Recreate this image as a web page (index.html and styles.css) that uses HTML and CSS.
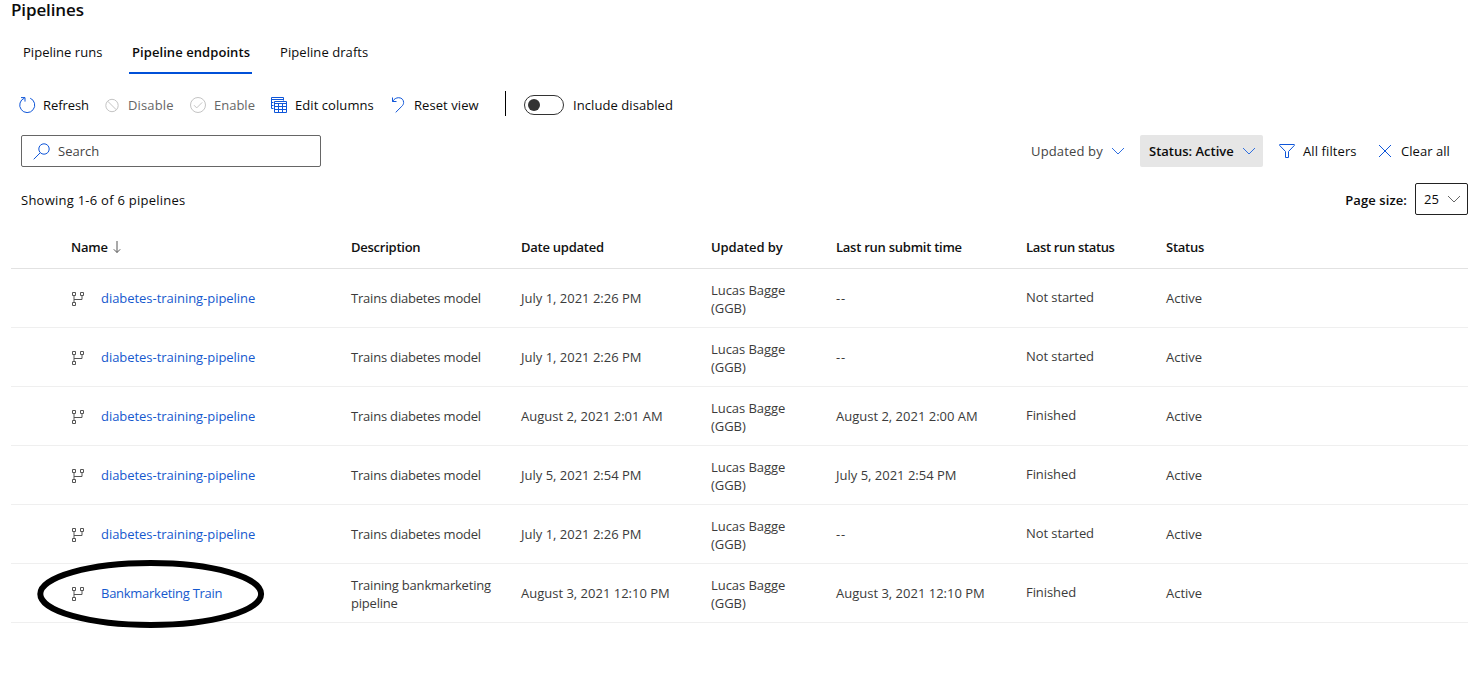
FILE: index.html
```
<!DOCTYPE html>
<html lang="en">
<head>
<meta charset="utf-8">
<title>Pipelines</title>
<link rel="stylesheet" href="styles.css">
</head>
<body>
<svg class="defs" width="0" height="0">
  <symbol id="branch" viewBox="0 0 14 15"><path d="M1.5 1.5h3v3h-3zM9.5 1.5h3v3h-3zM1.5 11.5h3v3h-3zM3 4.5v7M3 8.5h8v-4"/></symbol>
  <symbol id="chevron" viewBox="0 0 14 8"><path d="M1 1l6 6 6-6"/></symbol>
</svg>
<main class="page">
  <h1 class="title">Pipelines</h1>
  <nav class="tabs">
    <a class="tab tab-runs">Pipeline runs</a>
    <a class="tab tab-active">Pipeline endpoints</a>
    <a class="tab tab-drafts">Pipeline drafts</a>
  </nav>
  <div class="toolbar">
    <button class="tool refresh"><svg viewBox="0 0 16 16"><path d="M11.200 1.200A7.500 7.500 0 1 1 5.500 1.100M2 .6h4v4"/></svg><span>Refresh</span></button>
    <button class="tool disable muted"><svg viewBox="0 0 16 16"><circle cx="8" cy="8.5" r="6.200"/><path d="M3.700 4.200l8.600 8.600"/></svg><span>Disable</span></button>
    <button class="tool enable muted"><svg viewBox="0 0 16 16"><circle cx="8" cy="8" r="7.5"/><path d="M4 8.2l2.7 2.7 5.5-5.5"/></svg><span>Enable</span></button>
    <button class="tool columns"><svg viewBox="0 0 16 16"><path d="M2.5 11.5h-2v-11h12v3M0.500 2.500h12M0.500 5.500h2M0.500 8.500h2M3.500 4.500h12v11h-12zM3.500 6.500h12M3.500 9.500h12M3.500 12.500h12M7.500 6.500v9M11.500 6.500v9"/></svg><span>Edit columns</span></button>
    <button class="tool reset"><svg viewBox="0 0 16 16"><path d="M2.500 .5v4h4M2.500 4.500C4 2 6.200 .7 8.700 .7c3.300 0 4.900 2.400 4.900 4.800 0 1.700-.8 2.800-1.800 3.800L5.700 15.400"/></svg><span>Reset view</span></button>
    <span class="divider"></span>
    <span class="toggle"><span class="knob"></span></span>
    <span class="toggle-label">Include disabled</span>
  </div>
  <div class="filters">
    <label class="search"><svg viewBox="0 0 17 17"><circle cx="11" cy="6" r="5.200"/><path d="M7.300 9.700L.7 16.300"/></svg><span>Search</span></label>
    <div class="filter-actions">
      <button class="drop updated"><span>Updated by</span><svg class="chev"><use href="#chevron"/></svg></button>
      <button class="drop status"><span>Status: Active</span><svg class="chev"><use href="#chevron"/></svg></button>
      <button class="act all"><svg viewBox="0 0 16 16"><path d="M.7 1.500h14.600v1L9.500 8.500v6h-3v-6L.7 2.500z"/></svg><span>All filters</span></button>
      <button class="act clear"><svg viewBox="0 0 16 16"><path d="M2 2l12 12M14 2L2 14"/></svg><span>Clear all</span></button>
    </div>
  </div>
  <div class="summary">
    <span class="showing">Showing 1-6 of 6 pipelines</span>
    <span class="page-label">Page size:</span>
    <span class="select"><span>25</span><svg class="chev"><use href="#chevron"/></svg></span>
  </div>
  <section class="table">
    <div class="row head">
      <span class="name-head">Name<svg viewBox="0 0 8 12"><path d="M4 0v11.500M.8 8.300L4 11.500l3.200-3.200"/></svg></span><span>Description</span><span>Date updated</span><span class="head-by">Updated by</span><span>Last run submit time</span><span class="head-run">Last run status</span><span>Status</span>
    </div>
    <div class="row"><span class="name"><svg><use href="#branch"/></svg><a>diabetes-training-pipeline</a></span><span class="desc">Trains diabetes model</span><span class="date">July 1, 2021 2:26 PM</span><span class="who">Lucas Bagge (GGB)</span><span class="date none">--</span><span class="run">Not started</span><span>Active</span></div>
    <div class="row"><span class="name"><svg><use href="#branch"/></svg><a>diabetes-training-pipeline</a></span><span class="desc">Trains diabetes model</span><span class="date">July 1, 2021 2:26 PM</span><span class="who">Lucas Bagge (GGB)</span><span class="date none">--</span><span class="run">Not started</span><span>Active</span></div>
    <div class="row"><span class="name"><svg><use href="#branch"/></svg><a>diabetes-training-pipeline</a></span><span class="desc">Trains diabetes model</span><span class="date">August 2, 2021 2:01 AM</span><span class="who">Lucas Bagge (GGB)</span><span class="date">August 2, 2021 2:00 AM</span><span class="run">Finished</span><span>Active</span></div>
    <div class="row"><span class="name"><svg><use href="#branch"/></svg><a>diabetes-training-pipeline</a></span><span class="desc">Trains diabetes model</span><span class="date">July 5, 2021 2:54 PM</span><span class="who">Lucas Bagge (GGB)</span><span class="date">July 5, 2021 2:54 PM</span><span class="run">Finished</span><span>Active</span></div>
    <div class="row"><span class="name"><svg><use href="#branch"/></svg><a>diabetes-training-pipeline</a></span><span class="desc">Trains diabetes model</span><span class="date">July 1, 2021 2:26 PM</span><span class="who">Lucas Bagge (GGB)</span><span class="date none">--</span><span class="run">Not started</span><span>Active</span></div>
    <div class="row marked"><span class="name"><svg><use href="#branch"/></svg><a>Bankmarketing Train</a></span><span class="desc tall">Training bankmarketing pipeline</span><span class="date">August 3, 2021 12:10 PM</span><span class="who">Lucas Bagge (GGB)</span><span class="date">August 3, 2021 12:10 PM</span><span class="run">Finished</span><span>Active</span>
      <svg class="ring" viewBox="0 0 228 68"><ellipse cx="113.700" cy="34" rx="110.400" ry="31"/></svg>
    </div>
  </section>
</main>
</body>
</html>
```
FILE: styles.css
```
* { box-sizing: border-box; }
body { margin: 0; background: #fff; color: #0c0c0c; font: 13px/18px "Open Sans", "Noto Sans", sans-serif; overflow: hidden; }
.defs { display: block; height: 0; }
svg { fill: none; stroke: currentColor; flex: none; overflow: visible; }
button { border: 0; background: none; padding: 0; margin: 0; font: inherit; color: inherit; text-align: left; white-space: nowrap; }
.page { padding: 0 16px 0 11px; height: 688px; }
.title { margin: 0; height: 30px; font-size: 17px; line-height: 20px; font-weight: 600; letter-spacing: -.12px; }
.tabs { display: flex; height: 44px; padding-left: 12px; letter-spacing: .07px; }
.tab { line-height: 18px; padding-top: 13px; white-space: nowrap; }
.tab-runs { width: 106px; letter-spacing: .03px; }
.tab-active { width: 123px; padding-left: 3px; font-weight: 600; border-bottom: 2px solid #0050d8; margin-right: 28px; }
.toolbar { display: flex; align-items: center; height: 40px; margin-top: 11px; padding-left: 8px; letter-spacing: .07px; }
.tool { display: flex; align-items: center; gap: 8px; letter-spacing: inherit; }
.tool svg { width: 16px; height: 16px; color: #0f56d9; }
.refresh { width: 85px; letter-spacing: -.08px; }
.disable { width: 86px; letter-spacing: .15px; }
.enable { width: 81px; letter-spacing: 0; }
.columns { width: 119px; }
.reset { width: 115px; }
.tool.muted { color: #666; }
.tool.muted svg { color: #c4c4c4; }
.divider { width: 1px; height: 25px; margin: 0 1px 3px 0; background: #000; }
.toggle { width: 40px; height: 20px; border: 1px solid #333; border-radius: 10px; margin: 0 9px 0 17px; padding: 3px; }
.knob { display: block; width: 12px; height: 12px; border-radius: 50%; background: #333; }
.filters { display: flex; justify-content: space-between; margin: 10px 6px 0 10px; }
.search { display: flex; align-items: center; gap: 8px; width: 300px; height: 32px; border: 1px solid #666; border-radius: 2px; padding-left: 11px; color: #444; }
.search svg { width: 17px; height: 17px; color: #0f56d9; }
.filter-actions { display: flex; align-items: center; }
.drop { display: flex; align-items: center; justify-content: space-between; height: 32px; }
.chev { width: 14px; height: 8px; color: #2f6fe0; }
.updated { width: 94px; color: #444; margin-right: 15px; letter-spacing: .15px; }
.status { width: 123px; padding: 0 7px 0 9px; background: #e6e6e6; border-radius: 2px; font-weight: 600; }
.act { display: flex; align-items: center; gap: 8px; margin-left: 16px; }
.act svg { width: 16px; height: 16px; color: #0f56d9; }
.all { width: 82px; letter-spacing: .1px; }
.clear { width: 85px; letter-spacing: .05px; }
.summary { display: flex; align-items: center; margin: 16px 0 0 10px; height: 32px; width: 1447px; }
.showing { padding-top: 1px; letter-spacing: .25px; }
.page-label { margin-left: auto; padding-top: 1px; font-weight: 600; letter-spacing: .1px; }
.select { display: flex; align-items: center; justify-content: space-between; width: 53px; height: 32px; margin-left: 8px; padding: 0 6px 0 8px; border: 1px solid #222; border-radius: 2px; }
.select .chev { color: #666; }
.table { margin-top: 12px; }
.row { position: relative; display: grid; grid-template-columns: 280px 170px 190px 125px 190px 140px 1fr; align-items: center; width: 1457px; height: 59px; padding-left: 60px; border-bottom: 1px solid #efefef; color: #3b3b3b; }
.row > span { padding-right: 20px; }
.row.head { height: 42px; padding-bottom: 2px; font-weight: 600; color: #111; border-color: #e2e2e2; white-space: nowrap; letter-spacing: -.25px; }
.row .head-by { letter-spacing: -.08px; }
.row .head-run { letter-spacing: -.34px; }
.name-head { display: flex; align-items: center; gap: 5px; }
.name-head svg { width: 8px; height: 12px; color: #555; }
.name { display: flex; align-items: center; gap: 16px; color: #555; white-space: nowrap; }
.name svg { width: 14px; height: 15px; }
.name a { color: #1659ce; letter-spacing: -.04px; }
.marked .name a { letter-spacing: -.27px; }
.desc { letter-spacing: -.2px; }
.who, .tall { padding-top: 2px; }
.who { letter-spacing: -.05px; }
.none { letter-spacing: .7px; }
.run { padding-bottom: 2px; letter-spacing: -.08px; }
.ring { position: absolute; left: 26px; top: -4px; width: 228px; height: 68px; stroke: #000; stroke-width: 6; }
```
